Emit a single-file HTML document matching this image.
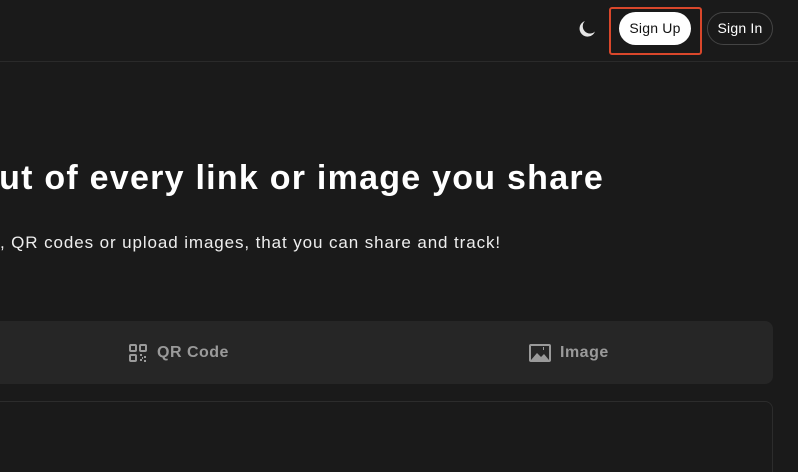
<!DOCTYPE html>
<html><head><style>
html,body{margin:0;width:798px;height:472px;overflow:hidden}
body{background:#1a1a1a;position:relative;font-family:"Liberation Sans",sans-serif;color:#fff}
.a{position:absolute;white-space:nowrap}
</style></head><body>
<div class="a" style="left:0;right:0;top:61px;height:1px;background:#2a2a2a"></div>
<svg class="a" style="left:577px;top:19px" width="20" height="20" viewBox="0 0 20 20"><path d="M8 2A8 8 0 1 0 18 12.5 6.5 6.5 0 0 1 8 2Z" fill="#e6e6e6"/></svg>
<div class="a" style="left:609px;top:7px;border:2px solid #d9472b;border-radius:3px;box-sizing:border-box;width:93px;height:48px"></div>
<div class="a" style="left:619px;top:12px;width:72px;height:33px;background:#fff;border-radius:17px;color:#111;font-size:14px;line-height:33px;text-align:center;letter-spacing:0.2px">Sign Up</div>
<div class="a" style="left:707px;top:12px;width:66px;height:33px;border:1px solid #444;box-sizing:border-box;border-radius:17px;font-size:14px;line-height:31px;text-align:center;letter-spacing:0.2px">Sign In</div>
<div class="a" style="right:194px;top:156px;font-size:34px;font-weight:bold;line-height:44px;letter-spacing:1.25px">ut of every link or image you share</div>
<div class="a" style="right:297px;top:231px;font-size:17px;line-height:24px;color:#eee;letter-spacing:0.9px">, QR codes or upload images, that you can share and track!</div>
<div class="a" style="left:-20px;top:321px;width:793px;height:63px;background:#262626;border-radius:8px"></div>
<svg class="a" style="left:129px;top:344px" width="18" height="18" viewBox="0 0 18 18" fill="none" stroke="#9a9a9a" stroke-width="2"><rect x="1" y="1" width="6" height="6" rx="1"/><rect x="11" y="1" width="6" height="6" rx="1"/><rect x="1" y="11" width="6" height="6" rx="1"/><path d="M11 11h2M15 13h2M11 16h2M15 17h2M13 14h1" /></svg>
<div class="a" style="left:157px;top:343px;font-size:16px;font-weight:bold;color:#9a9a9a;line-height:20px;letter-spacing:0.5px">QR Code</div>
<svg class="a" style="left:529px;top:344px" width="22" height="18" viewBox="0 0 22 18"><rect x="0" y="0" width="22" height="18" rx="2" fill="#9a9a9a"/><rect x="2" y="2" width="18" height="14" fill="#262626"/><path d="M2 16L8 9l4 4 3-3 5 6Z" fill="#9a9a9a"/><rect x="14" y="3" width="1" height="3" fill="#9a9a9a"/></svg>
<div class="a" style="left:560px;top:343px;font-size:16px;font-weight:bold;color:#9a9a9a;line-height:20px;letter-spacing:0.5px">Image</div>
<div class="a" style="left:-20px;top:401px;width:793px;height:71px;border:1px solid #2c2c2c;border-bottom:none;border-radius:8px 8px 0 0;box-sizing:border-box"></div>
</body></html>
